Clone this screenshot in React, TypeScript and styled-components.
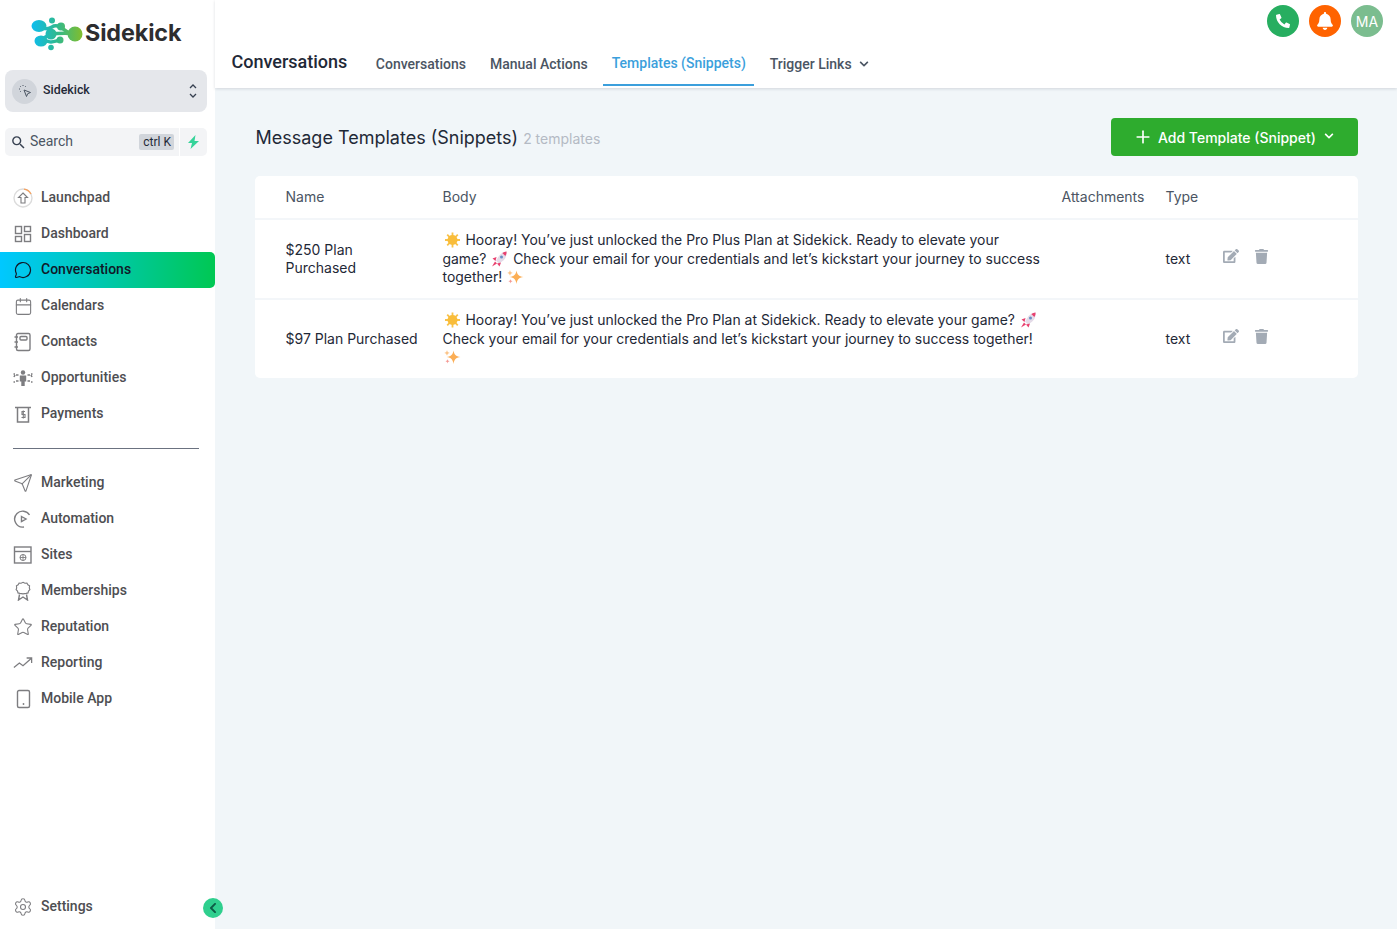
import React from "react";
import styled, { createGlobalStyle } from "styled-components";
import { Calendar, MessageCircle, Plus, Send, Settings, Star } from "lucide-react";
import { FaBell, FaChevronDown, FaChevronLeft, FaEdit, FaPhoneAlt, FaTrash } from "react-icons/fa";
import { MdSearch } from "react-icons/md";

const GlobalStyle = createGlobalStyle`
  html, body { margin: 0; padding: 0; height: 100%; }
  body { font-family: "Inter", "Liberation Sans", sans-serif; background: #f1f6f9; overflow: hidden; }
  * { box-sizing: border-box; }
`;

const Shell = styled.div`
  display: flex;
  width: 1397px;
  height: 929px;
  overflow: hidden;
`;

const Sidebar = styled.aside`
  position: relative;
  flex: 0 0 215px;
  display: flex;
  flex-direction: column;
  background: #fff;
  font-family: "Roboto", sans-serif;
`;

const LogoBox = styled.div`
  height: 70px;
  display: flex;
  align-items: flex-start;
  padding: 17px 0 0 31px;
  gap: 2px;
`;

const LogoText = styled.span`
  font-family: "Inter", sans-serif;
  font-weight: 700;
  font-size: 23.3px;
  line-height: 31px;
  letter-spacing: -0.1px;
  color: #2d2d2f;
`;

const Switcher = styled.div`
  height: 42px;
  margin: 0 8px 0 5px;
  padding: 0 10px 0 7px;
  display: flex;
  align-items: center;
  gap: 6px;
  background: #e5e7eb;
  border-radius: 8px;
`;

const SwitcherAvatar = styled.div`
  width: 25px;
  height: 25px;
  border-radius: 50%;
  background: #d1d5db;
  display: flex;
  align-items: center;
  justify-content: center;
`;

const SwitcherName = styled.span`
  flex: 1;
  margin-bottom: 3px;
  font-size: 12.4px;
  font-weight: 500;
  color: #1f2937;
`;

const SearchRow = styled.div`
  display: flex;
  gap: 1px;
  margin: 16px 8px 24px 5px;
  height: 28px;
`;

const SearchBox = styled.div`
  flex: 1;
  display: flex;
  align-items: center;
  gap: 3px;
  padding: 0 5px 0 5px;
  background: #f3f4f6;
  border-radius: 5px 0 0 5px;
  color: #4b5563;
  font-size: 14px;
`;

const SearchLabel = styled.span`
  flex: 1;
  margin-bottom: 2px;
`;

const Kbd = styled.span`
  background: #d1d5db;
  color: #1f2937;
  font-size: 12px;
  line-height: 16px;
  padding: 0 3px 0 4px;
  border-radius: 2px;
`;

const BoltBox = styled.div`
  flex: 0 0 27px;
  display: flex;
  align-items: center;
  justify-content: center;
  background: #f3f4f6;
  border-radius: 0 5px 5px 0;
`;

const NavItem = styled.div<{ $active?: boolean }>`
  height: 36px;
  display: flex;
  align-items: center;
  gap: 8px;
  padding-left: 13px;
  font-size: 14px;
  font-weight: 500;
  color: ${(p) => (p.$active ? "#101828" : "#4e4e52")};
  background: ${(p) => (p.$active ? "linear-gradient(90deg, #00c8ff 0%, #00c853 100%)" : "transparent")};
  border-radius: ${(p) => (p.$active ? "0 5px 5px 0" : "0")};
`;

const NavLabel = styled.span`
  margin-bottom: 2px;
`;

const NavIcon = styled.span<{ $active?: boolean }>`
  width: 20px;
  height: 20px;
  display: flex;
  align-items: center;
  justify-content: center;
  color: ${(p) => (p.$active ? "#101828" : "#7d7d80")};
`;

const NavDivider = styled.hr`
  border: 0;
  border-top: 1px solid #6b7280;
  margin: 16px 16px 16px 13px;
`;

const SidebarFoot = styled.div`
  margin-top: auto;
  padding-bottom: 4px;
`;

const CollapseButton = styled.div`
  position: absolute;
  left: 203px;
  top: 898px;
  width: 20px;
  height: 20px;
  border-radius: 50%;
  background: #2fcf8e;
  display: flex;
  align-items: center;
  justify-content: center;
  color: #0d5c46;
`;

const Main = styled.main`
  flex: 1;
  min-width: 0;
  display: flex;
  flex-direction: column;
`;

const TopBar = styled.header`
  position: relative;
  height: 88px;
  background: #fff;
  box-shadow: 0 1px 3px rgba(16, 24, 40, 0.14);
  display: flex;
  align-items: flex-end;
  padding-left: 16.5px;
`;

const TopTitle = styled.h1`
  margin: 0 19.5px 14px 0;
  font-family: "Roboto", sans-serif;
  font-size: 18px;
  line-height: 24px;
  font-weight: 500;
  color: #1f2937;
`;

const Tabs = styled.nav`
  display: flex;
  gap: 6px;
  margin-bottom: 2px;
`;

const Tab = styled.div<{ $active?: boolean }>`
  display: flex;
  align-items: center;
  gap: 7px;
  height: 44px;
  padding: ${(p) => (p.$active ? "0 8px 0 9px" : "2px 9px 0")};
  margin-right: ${(p) => (p.$active ? "1px" : "0")};
  font-family: "Roboto", sans-serif;
  font-size: 14px;
  font-weight: 500;
  color: ${(p) => (p.$active ? "#3b9fdc" : "#4b5563")};
  border-bottom: 2px solid ${(p) => (p.$active ? "#3b9fdc" : "transparent")};
`;

const TopActions = styled.div`
  position: absolute;
  top: 5px;
  right: 14px;
  display: flex;
  gap: 10px;
`;

const RoundButton = styled.div<{ $bg: string }>`
  width: 32px;
  height: 32px;
  border-radius: 50%;
  background: ${(p) => p.$bg};
  color: #fff;
  font-size: 14px;
  display: flex;
  align-items: center;
  justify-content: center;
`;

const Content = styled.section`
  padding: 30px 39px 0 40px;
`;

const HeadRow = styled.div`
  display: flex;
  align-items: center;
  height: 38px;
  margin-bottom: 20px;
`;

const PageTitle = styled.h2`
  margin: 0 0 0 0.5px;
  font-size: 18px;
  font-weight: 400;
  color: #1f2937;
`;

const Count = styled.span`
  margin-left: 5px;
  margin-top: 3px;
  font-size: 14px;
  color: #b4bac4;
`;

const AddButton = styled.div`
  margin-left: auto;
  width: 247px;
  height: 38px;
  display: flex;
  align-items: center;
  padding-left: 22px;
  gap: 5px;
  background: #2eac2e;
  border-radius: 4px;
  color: #fff;
  font-size: 14px;
  font-weight: 500;
`;

const AddCaret = styled.span`
  display: flex;
  margin: 0 0 2px 3px;
`;

const Card = styled.div`
  background: #fff;
  border-radius: 5px;
  font-size: 14px;
  line-height: 18.5px;
  color: #1f2937;
`;

const Row = styled.div<{ $head?: boolean }>`
  display: grid;
  grid-template-columns: 157px 619px 104px 57px 1fr;
  align-items: center;
  height: ${(p) => (p.$head ? "42px" : "80px")};
  padding-left: 30.5px;
  color: ${(p) => (p.$head ? "#4b5563" : "#1f2937")};
  & + & {
    border-top: 2px solid #f3f6f9;
  }
`;

const NameCell = styled.div`
  padding-right: 40px;
  white-space: nowrap;
`;

const BodyCell = styled.div`
  white-space: nowrap;
  font-size: 13.95px;
`;

const Emoji = styled.svg`
  display: inline-block;
  width: 19px;
  height: 16px;
  vertical-align: -3px;
`;

const RowActions = styled.div`
  display: flex;
  align-items: center;
  gap: 15px;
  color: #a3abb5;
  margin-bottom: 6px;
  font-size: 16px;
`;

const LogoMark = () => (
  <svg width="52" height="34" viewBox="0 0 52 34" fill="none">
    <defs>
      <linearGradient id="lg" x1="0" y1="0" x2="52" y2="0" gradientUnits="userSpaceOnUse">
        <stop offset="0" stopColor="#0cbdf2" />
        <stop offset="0.5" stopColor="#2fb98e" />
        <stop offset="1" stopColor="#84bd2a" />
      </linearGradient>
    </defs>
    <g fill="url(#lg)">
      <ellipse cx="8" cy="9" rx="7.500" ry="6" />
      <circle cx="21" cy="3.500" r="3" />
      <circle cx="44" cy="17" r="7.500" />
      <ellipse cx="10" cy="24" rx="6.500" ry="5.500" />
      <circle cx="20" cy="30.500" r="2.800" />
      <circle cx="20" cy="17" r="5.500" />
      <circle cx="30" cy="9.500" r="4" />
      <circle cx="29" cy="23" r="3.500" />
    </g>
    <g stroke="url(#lg)" strokeWidth="3.500" strokeLinecap="round">
      <path d="M10 10c5 3 8 2 11 0s6-1 8 0" />
      <path d="M30 10c3 3 6 6 13 7" />
      <path d="M20 17c6 0 14-2 22 0" />
      <path d="M11 24c5-1 6 1 9 1s5-1 9-2" />
      <path d="M12 22c2-2 5-3 7-4" />
    </g>
  </svg>
);

const Sun = () => (
  <Emoji viewBox="0 0 19 16">
    <g stroke="#f8c24a" strokeWidth="1.800">
      <path d="M9.500 0.500v15M2 8h15M4.200 2.700l10.600 10.600M14.800 2.700L4.200 13.300" />
    </g>
    <circle cx="9.500" cy="8" r="5" fill="#f9bd3a" />
  </Emoji>
);

const Rocket = () => (
  <Emoji viewBox="0 0 19 16">
    <path d="M16.500 0.500c-4 .5-7 3-8.500 6l-2 3 3 3 3-2c3-2 5-5 4.500-10z" fill="#e4dbe8" />
    <path d="M16.500 0.500c-1.500.2-3 .8-4.200 1.500l3 3c.9-1.300 1.400-2.800 1.200-4.500z" fill="#e8416f" />
    <circle cx="11.500" cy="6" r="1.500" fill="#6b8fc4" />
    <path d="M6.500 6L2.500 7.500 5.500 10zM11 11.500L9.500 15.500 7 12.500zM5 10.500L2 15.500l5-3z" fill="#e8416f" />
  </Emoji>
);

const Sparkles = () => (
  <Emoji viewBox="0 0 19 16">
    <path d="M10.500 1.500c.8 4.300 2.200 5.700 7 6.500-4.800.8-6.200 2.200-7 7-.8-4.800-2.200-6.200-7-7 4.800-.8 6.200-2.200 7-6.500z" fill="#fbae55" />
    <path d="M4 1c.4 1.800 1.100 2.500 2.800 2.900C5.100 4.300 4.400 5 4 6.800 3.600 5 2.900 4.300 1.200 3.900 2.900 3.500 3.600 2.800 4 1z" fill="#fbc58a" />
    <path d="M4.500 10c.3 1.400.8 1.900 2.200 2.200-1.400.3-1.900.8-2.200 2.200-.3-1.400-.8-1.900-2.200-2.200 1.400-.3 1.900-.8 2.200-2.200z" fill="#f59a94" />
  </Emoji>
);

const line = { fill: "none", stroke: "currentColor", strokeWidth: 1.4 } as const;

const IconSvg = ({ children }: { children: React.ReactNode }) => (
  <svg width="20" height="20" viewBox="0 0 20 20" {...line}>
    {children}
  </svg>
);

const LaunchpadIcon = () => (
  <IconSvg>
    <circle cx="10" cy="10" r="9" stroke="#dcdcdc" strokeWidth="1.400" />
    <path d="M11 1.100A9 9 0 0 1 18 6" stroke="#f4a261" strokeWidth="1.400" />
    <path d="M10 5l4.500 4.500H12V15H8V9.500H5.500z" strokeWidth="1.100" />
  </IconSvg>
);

const DashboardIcon = () => (
  <IconSvg>
    <rect x="2.500" y="2.500" width="6" height="7" />
    <rect x="11.500" y="2.500" width="6" height="5" />
    <rect x="2.500" y="12.500" width="6" height="5" />
    <rect x="11.500" y="10.500" width="6" height="7" />
  </IconSvg>
);

const ContactsIcon = () => (
  <IconSvg>
    <rect x="3.500" y="1.500" width="13.500" height="17" rx="1.500" />
    <rect x="7" y="4.500" width="7" height="3.500" rx="1" />
    <path d="M1.500 5h3.500M1.500 10h3.500M1.500 15h3.500" />
  </IconSvg>
);

const OpportunitiesIcon = () => (
  <svg width="20" height="20" viewBox="0 0 20 20" {...line}>
    <circle cx="10" cy="4.500" r="2.200" fill="currentColor" stroke="none" />
    <path d="M6.800 7.500h6.400v6h-1.500V18H8.300v-4.500H6.800z" fill="currentColor" stroke="none" />
    <g strokeWidth="1.600">
      <path d="M5.500 7H3M5.500 13H3M14.500 7H17M14.500 13H17" />
      <path d="M0.500 6h1.500M0.500 14h1.500M18 6h1.500M18 14h1.500M2 7l-1 2M18 7l1 2" />
    </g>
  </svg>
);

const PaymentsIcon = () => (
  <IconSvg>
    <path d="M2 3.500h16M4.500 3.500V18h11V3.500" strokeWidth="1.500" />
    <path d="M12 7.500H9v3h3v3H8.500M10.300 6.500v8" strokeWidth="1.100" />
  </IconSvg>
);

const AutomationIcon = () => (
  <IconSvg>
    <path d="M4 4.500A8 8 0 0 1 16.500 6M4 4.500A8 8 0 0 0 11 18" />
    <path d="M8.500 7.500l4.500 2.500-4.500 2.500z" />
  </IconSvg>
);

const SitesIcon = () => (
  <IconSvg>
    <rect x="1.500" y="2" width="16.500" height="16" />
    <path d="M1.500 6.500H18" />
    <circle cx="10" cy="12.500" r="3" strokeWidth="1" />
    <path d="M7 12.500h6M10 9.500v6" strokeWidth="0.900" />
  </IconSvg>
);

const MembershipsIcon = () => (
  <IconSvg>
    <path d="M10 1l2.300 1.100 2.500-.2 1.200 2.200 2.100 1.300-.3 2.500L18.500 10l-1.700 1.800-.6 2.300-2.300.5L10 15.300l-3.900-.7-2.300-.5-.6-2.300L1.500 10l.700-2.100-.3-2.500L4 4.100l1.200-2.200 2.500.2z" transform="translate(1.900 0.500) scale(0.810)" />
    <path d="M6.500 13.500L5.500 19l4.500-3 4.500 3-1-5.500" />
  </IconSvg>
);

const ReportingIcon = () => (
  <svg width="22" height="20" viewBox="0 0 22 20" {...line}>
    <path d="M1 15l6-5 4 3 9-8M15 4.500h5.500V10" />
  </svg>
);

const MobileIcon = () => (
  <IconSvg>
    <rect x="4.500" y="1.500" width="12" height="17" rx="1.500" />
    <circle cx="10.500" cy="15" r="0.900" fill="currentColor" stroke="none" />
  </IconSvg>
);

const PointerIcon = () => (
  <svg width="14" height="14" viewBox="0 0 14 14" fill="none" stroke="#4b5563" strokeWidth="1">
    <path d="M6 6l6.500 2.500-2.800 1.200-1.200 2.800z" />
    <path d="M5 1v1.500M1 5h1.500M2.200 2.200l1 1M7.800 2.200l-1 1M2.200 7.800l1-1" strokeDasharray="1 0.500" />
  </svg>
);

const UpDownIcon = () => (
  <svg width="8" height="16" viewBox="0 0 8 16" fill="none" stroke="#374151" strokeWidth="1.300">
    <path d="M1 5l3-3 3 3M1 11l3 3 3-3" />
  </svg>
);

const BoltIcon = () => (
  <svg width="13" height="14" viewBox="0 0 13 14" fill="#34d399">
    <path d="M8.500 0L1 8h4l-1.500 6L12 6H7.500z" />
  </svg>
);

const Nav = ({ icon, label, active }: { icon: React.ReactNode; label: string; active?: boolean }) => (
  <NavItem $active={active}>
    <NavIcon $active={active}>{icon}</NavIcon>
    <NavLabel>{label}</NavLabel>
  </NavItem>
);

export default function App() {
  return (
    <Shell>
      <GlobalStyle />
      <Sidebar>
        <LogoBox>
          <LogoMark />
          <LogoText>Sidekick</LogoText>
        </LogoBox>
        <Switcher>
          <SwitcherAvatar>
            <PointerIcon />
          </SwitcherAvatar>
          <SwitcherName>Sidekick</SwitcherName>
          <UpDownIcon />
        </Switcher>
        <SearchRow>
          <SearchBox>
            <MdSearch size={17} color="#374151" />
            <SearchLabel>Search</SearchLabel>
            <Kbd>ctrl K</Kbd>
          </SearchBox>
          <BoltBox>
            <BoltIcon />
          </BoltBox>
        </SearchRow>
        <Nav icon={<LaunchpadIcon />} label="Launchpad" />
        <Nav icon={<DashboardIcon />} label="Dashboard" />
        <Nav icon={<MessageCircle size={18} strokeWidth={1.6} />} label="Conversations" active />
        <Nav icon={<Calendar size={19} strokeWidth={1.4} />} label="Calendars" />
        <Nav icon={<ContactsIcon />} label="Contacts" />
        <Nav icon={<OpportunitiesIcon />} label="Opportunities" />
        <Nav icon={<PaymentsIcon />} label="Payments" />
        <NavDivider />
        <Nav icon={<Send size={20} strokeWidth={1.3} />} label="Marketing" />
        <Nav icon={<AutomationIcon />} label="Automation" />
        <Nav icon={<SitesIcon />} label="Sites" />
        <Nav icon={<MembershipsIcon />} label="Memberships" />
        <Nav icon={<Star size={20} strokeWidth={1.3} />} label="Reputation" />
        <Nav icon={<ReportingIcon />} label="Reporting" />
        <Nav icon={<MobileIcon />} label="Mobile App" />
        <SidebarFoot>
          <Nav icon={<Settings size={20} strokeWidth={1.3} />} label="Settings" />
        </SidebarFoot>
        <CollapseButton>
          <FaChevronLeft size={12} />
        </CollapseButton>
      </Sidebar>
      <Main>
        <TopBar>
          <TopTitle>Conversations</TopTitle>
          <Tabs>
            <Tab>Conversations</Tab>
            <Tab>Manual Actions</Tab>
            <Tab $active>Templates (Snippets)</Tab>
            <Tab>
              Trigger Links <FaChevronDown size={10} />
            </Tab>
          </Tabs>
          <TopActions>
            <RoundButton $bg="#27ae60">
              <FaPhoneAlt size={14} />
            </RoundButton>
            <RoundButton $bg="#ff6300">
              <FaBell size={18} />
            </RoundButton>
            <RoundButton $bg="#7bbd8f">MA</RoundButton>
          </TopActions>
        </TopBar>
        <Content>
          <HeadRow>
            <PageTitle>Message Templates (Snippets)</PageTitle>
            <Count>2 templates</Count>
            <AddButton>
              <Plus size={20} strokeWidth={2} />
              Add Template (Snippet)
              <AddCaret>
                <FaChevronDown size={10} />
              </AddCaret>
            </AddButton>
          </HeadRow>
          <Card>
            <Row $head>
              <div>Name</div>
              <div>Body</div>
              <div>Attachments</div>
              <div>Type</div>
              <div />
            </Row>
            <Row>
              <NameCell>
                $250 Plan
                <br />
                Purchased
              </NameCell>
              <BodyCell>
                <Sun /> Hooray! You’ve just unlocked the Pro Plus Plan at Sidekick. Ready to elevate your
                <br />
                game? <Rocket /> Check your email for your credentials and let’s kickstart your journey to success
                <br />
                together! <Sparkles />
              </BodyCell>
              <div />
              <div>text</div>
              <RowActions>
                <FaEdit />
                <FaTrash size={15} />
              </RowActions>
            </Row>
            <Row>
              <NameCell>$97 Plan Purchased</NameCell>
              <BodyCell>
                <Sun /> Hooray! You’ve just unlocked the Pro Plan at Sidekick. Ready to elevate your game? <Rocket />
                <br />
                Check your email for your credentials and let’s kickstart your journey to success together!
                <br />
                <Sparkles />
              </BodyCell>
              <div />
              <div>text</div>
              <RowActions>
                <FaEdit />
                <FaTrash size={15} />
              </RowActions>
            </Row>
          </Card>
        </Content>
      </Main>
    </Shell>
  );
}
